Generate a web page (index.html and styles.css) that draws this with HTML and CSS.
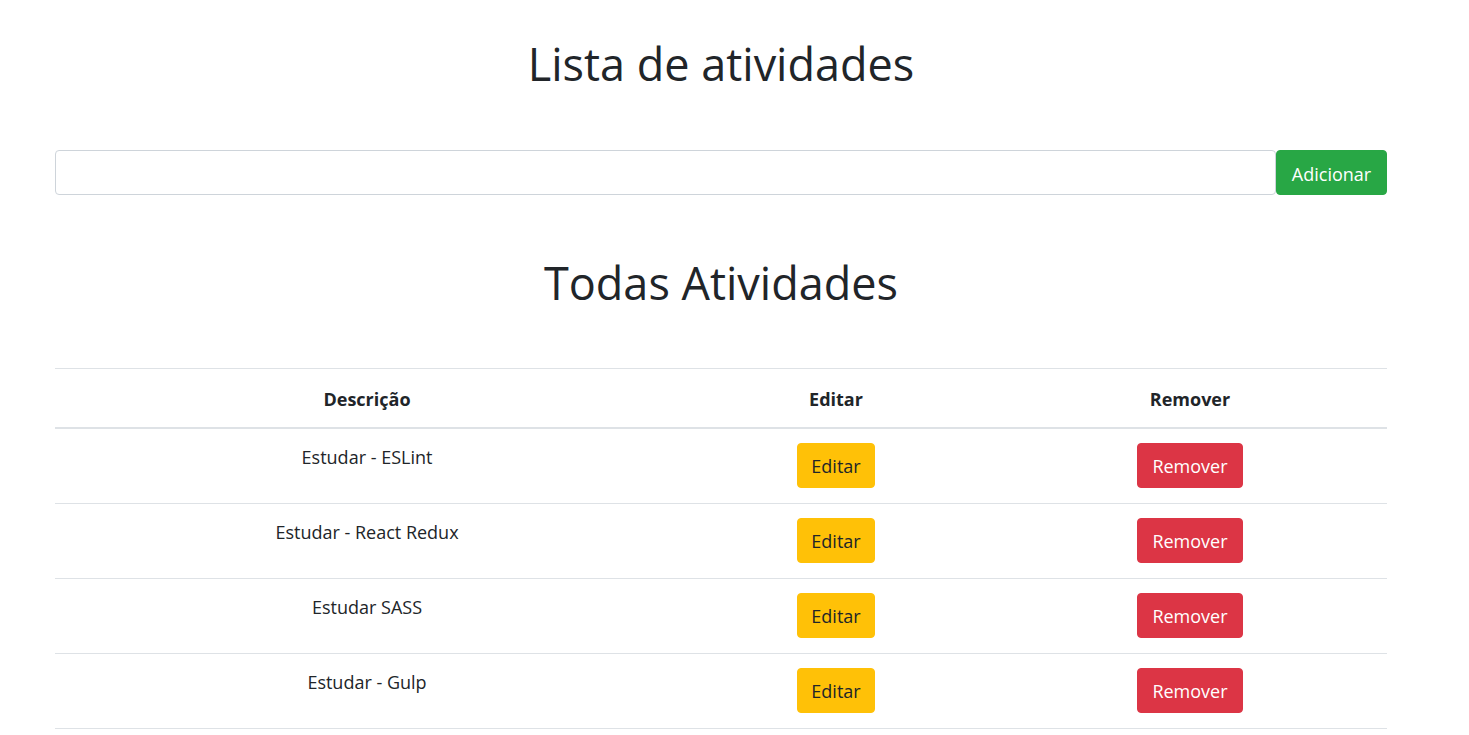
FILE: index.html
```html
<!DOCTYPE html>
<html lang="pt-BR">
<head>
<meta charset="utf-8">
<title>Lista de atividades</title>
<link rel="stylesheet" href="styles.css">
</head>
<body>
<div class="container">
  <h1 class="title">Lista de atividades</h1>
  <form class="add-form">
    <input class="add-input" type="text">
    <button class="btn btn-success" type="button">Adicionar</button>
  </form>
  <h1 class="title title-all">Todas Atividades</h1>
  <table class="table">
    <thead>
      <tr><th class="col-desc">Descrição</th><th class="col-edit">Editar</th><th class="col-remove">Remover</th></tr>
    </thead>
    <tbody>
      <tr><td>Estudar - ESLint</td><td><button class="btn btn-warning" type="button">Editar</button></td><td><button class="btn btn-danger" type="button">Remover</button></td></tr>
      <tr><td>Estudar - React Redux</td><td><button class="btn btn-warning" type="button">Editar</button></td><td><button class="btn btn-danger" type="button">Remover</button></td></tr>
      <tr><td>Estudar SASS</td><td><button class="btn btn-warning" type="button">Editar</button></td><td><button class="btn btn-danger" type="button">Remover</button></td></tr>
      <tr><td>Estudar - Gulp</td><td><button class="btn btn-warning" type="button">Editar</button></td><td><button class="btn btn-danger" type="button">Remover</button></td></tr>
    </tbody>
  </table>
</div>
</body>
</html>
```

FILE: styles.css
```css
html, body {
  margin: 0;
  padding: 0;
  background: #fff;
}
body {
  font-family: "Open Sans", "Noto Sans", "Liberation Sans", sans-serif;
  font-size: 18px;
  line-height: 1.5;
  color: #212529;
}
.container {
  width: 1332px;
  margin-left: 55px;
  padding-top: 34px;
  display: flex;
  flex-direction: column;
}
.title {
  margin: 0;
  font-size: 45px;
  line-height: 60px;
  font-weight: 400;
  text-align: center;
  color: #212529;
}
.add-form {
  margin: 56px 0 0;
  display: flex;
  height: 45px;
}
.add-input {
  flex: 1;
  margin: 0;
  height: 45px;
  box-sizing: border-box;
  border: 1px solid #ced4da;
  border-radius: 4px;
  padding: 0 14px;
  font: inherit;
  outline: none;
}
.btn {
  box-sizing: border-box;
  height: 45px;
  padding: 0 14px;
  border: 1px solid transparent;
  border-radius: 4px;
  font-family: inherit;
  font-size: 18px;
  line-height: 1;
  cursor: pointer;
}
.add-form .btn {
  width: 111px;
  padding-top: 2px;
}
.btn-success { background: #28a745; border-color: #28a745; color: #fff; }
.btn-warning { background: #ffc107; border-color: #ffc107; color: #212529; padding: 0 13px; }
.btn-danger { background: #dc3545; border-color: #dc3545; color: #fff; }
.title-all {
  margin-top: 58px;
}
.table {
  margin-top: 55px;
  width: 1332px;
  border-collapse: collapse;
  table-layout: fixed;
}
.col-desc { width: 600px; }
.col-edit { width: 290px; }
.col-remove { width: 370px; }
.table th {
  border-top: 1px solid #dee2e6;
  border-bottom: 2px solid #dee2e6;
  padding: 16px 12px 14px;
  font-weight: 700;
  text-align: center;
  line-height: 28px;
}
.table td {
  border-top: 1px solid #dee2e6;
  border-bottom: 1px solid #dee2e6;
  padding: 14px 12px 15px;
  text-align: center;
  vertical-align: top;
  line-height: 28px;
}
```
